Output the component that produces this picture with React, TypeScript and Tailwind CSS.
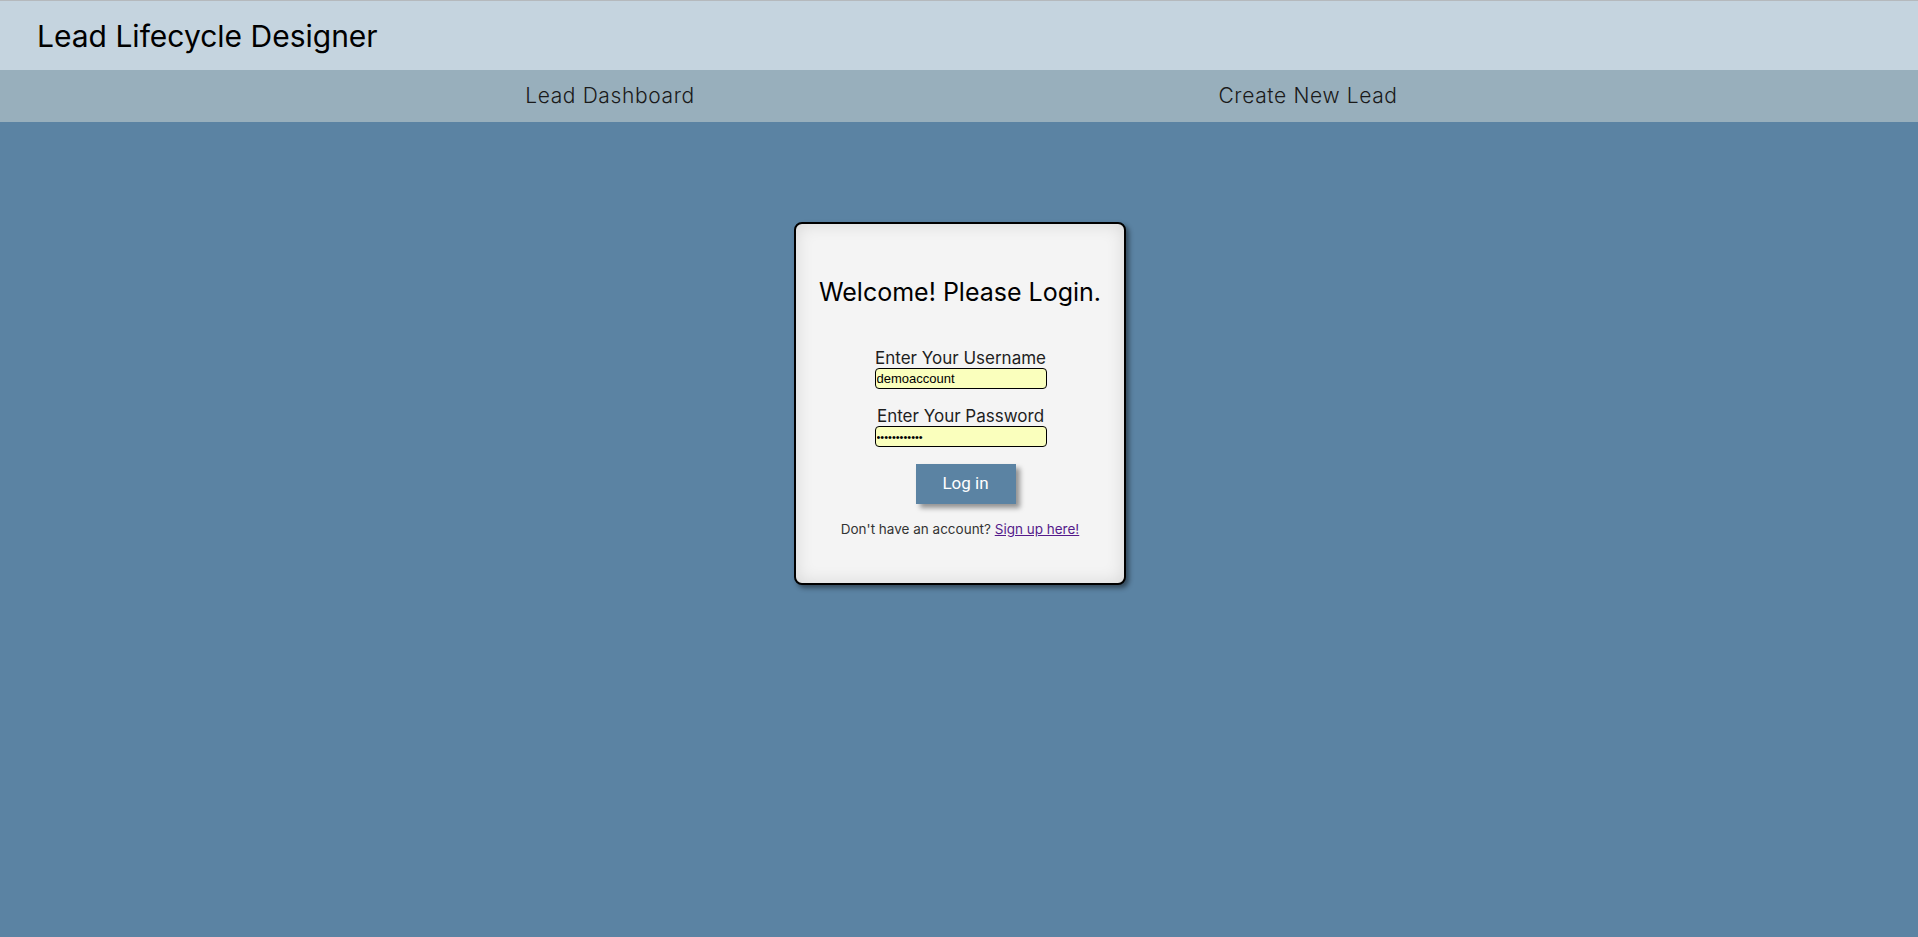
import { useState } from "react";

export default function App() {
  const [username, setUsername] = useState("demoaccount");
  const [password, setPassword] = useState("demopassword");

  return (
    <div className="min-h-screen flex flex-col bg-[#5b83a3] font-['Inter','Open_Sans',sans-serif]">
      <header className="h-[70px] border-t border-[#b5b9bd] bg-[#c5d4df] flex items-center pl-[37px]">
        <h1 className="text-[30px] leading-none text-black">Lead Lifecycle Designer</h1>
      </header>

      <nav className="h-[52px] bg-[#98afbc]">
        <ul className="w-[1396px] h-full mx-auto flex items-center">
          <li className="flex-1 text-center text-[21px] tracking-[0.03em] font-light text-[#1a1a1a]">
            <a href="#">Lead Dashboard</a>
          </li>
          <li className="flex-1 text-center text-[21px] tracking-[0.03em] font-light text-[#1a1a1a]">
            <a href="#">Create New Lead</a>
          </li>
        </ul>
      </nav>

      <main className="flex-1 flex justify-center pl-[2px]">
        <div className="mt-[100px] w-[332px] h-[363px] border-2 border-black rounded-[8px] bg-[#f4f4f4] shadow-[inset_0_0_18px_rgba(0,0,0,0.12),3px_3px_5px_rgba(0,0,0,0.45)] flex flex-col items-center pt-[54px]">
          <h2 className="text-[25px] leading-[28px] text-black">Welcome! Please Login.</h2>

          <form className="flex flex-col items-center mt-[42px] pl-[1px]" onSubmit={(e) => e.preventDefault()}>
            <label className="text-[17px] leading-[20px] text-[#1e1e1e]" htmlFor="username">
              Enter Your Username
            </label>
            <input
              id="username"
              value={username}
              onChange={(e) => setUsername(e.target.value)}
              className="w-[172px] h-[21px] border border-black rounded-[4px] bg-[#faffbd] px-[1px] text-[13px] text-black font-['Liberation_Sans',Arial,sans-serif] outline-none"
            />

            <label className="mt-[17px] text-[17px] leading-[20px] text-[#1e1e1e]" htmlFor="password">
              Enter Your Password
            </label>
            <input
              id="password"
              type="password"
              value={password}
              onChange={(e) => setPassword(e.target.value)}
              className="w-[172px] h-[21px] border border-black rounded-[4px] bg-[#faffbd] px-[1px] text-[11px] text-black font-['Liberation_Sans',Arial,sans-serif] outline-none"
            />

            <button
              type="submit"
              className="mt-[17px] ml-[10px] w-[100px] h-[40px] bg-[#5b83a3] text-white text-[17px] font-['Roboto','Liberation_Sans',sans-serif] shadow-[4px_4px_5px_rgba(0,0,0,0.4)]"
            >
              Log in
            </button>
          </form>

          <p className="mt-[17px] text-[13.5px] leading-[16px] text-[#333]">
            Don't have an account?{" "}
            <a href="#" className="underline text-[#551a8b]">
              Sign up here!
            </a>
          </p>
        </div>
      </main>
    </div>
  );
}
